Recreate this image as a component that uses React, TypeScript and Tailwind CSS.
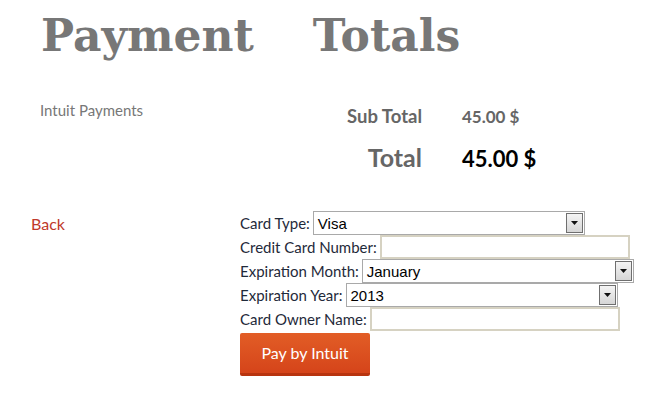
import React from "react";

const sans = "font-['Lato','Liberation_Sans',sans-serif]";

const SelectBox = ({ value, width }: { value: string; width: string }) => (
  <div className={`flex h-[24px] items-center border border-[#a9a9a9] bg-white pl-[4px] pr-[1px] ${width}`}>
    <span className="flex-1 font-['Liberation_Sans',sans-serif] text-[15px] leading-none text-black">{value}</span>
    <span className="flex h-[20px] w-[17px] items-center justify-center border border-[#6f6f6f] bg-gradient-to-b from-[#f4f4f4] to-[#d6d6d6]">
      <svg width="7" height="4" viewBox="0 0 7 4">
        <path d="M0 0h7L3.5 4z" fill="#111" />
      </svg>
    </span>
  </div>
);

const TextBox = ({ width }: { width: string }) => (
  <div className={`h-[24px] border-2 border-[#d6d2c2] bg-white ${width}`} />
);

const Row = ({ label, children }: { label: string; children: React.ReactNode }) => (
  <div className="flex h-[24px] items-center gap-[3px]">
    <span className="text-[15px] leading-none text-[#1f2a3a]">{label}</span>
    {children}
  </div>
);

export default function App() {
  return (
    <div className={`h-[400px] w-[667px] bg-white ${sans}`}>
      <h1 className="flex gap-[59px] pl-[41px] pt-[8px] font-['DejaVu_Serif',serif] text-[44px] font-bold leading-[56px] text-[#777]">
        <span>Payment</span>
        <span>Totals</span>
      </h1>

      <div className="mt-[36px] flex">
        <div className="w-[300px] pl-[40px] pt-[3px] text-[15px] leading-none text-[#777]">Intuit Payments</div>
        <div className="flex flex-col">
          <div className="mt-[3px] flex items-baseline font-bold">
            <span className="w-[122px] text-right text-[18.5px] text-[#666]">Sub Total</span>
            <span className="ml-[40px] text-[17px] text-[#666]">45.00 $</span>
          </div>
          <div className="mt-[8px] flex items-baseline font-bold">
            <span className="w-[122px] text-right text-[25px] text-[#666]">Total</span>
            <span className="ml-[40px] text-[22px] text-black">45.00 $</span>
          </div>
        </div>
      </div>

      <div className="mt-[35px] flex">
        <a className="w-[240px] pl-[31px] pt-[5px] text-[16px] leading-none text-[#c0392b]">Back</a>
        <div className="flex flex-col">
          <Row label="Card Type:">
            <SelectBox value="Visa" width="w-[272px]" />
          </Row>
          <Row label="Credit Card Number:">
            <TextBox width="w-[250px]" />
          </Row>
          <Row label="Expiration Month:">
            <SelectBox value="January" width="w-[272px]" />
          </Row>
          <Row label="Expiration Year:">
            <SelectBox value="2013" width="w-[272px]" />
          </Row>
          <Row label="Card Owner Name:">
            <TextBox width="w-[250px]" />
          </Row>
          <button className="mt-[2px] h-[43px] w-[130px] rounded-[2px] border-b-[3px] border-[#b8340f] bg-gradient-to-b from-[#e25d26] to-[#d5441a] text-[16px] text-white">
            Pay by Intuit
          </button>
        </div>
      </div>
    </div>
  );
}
